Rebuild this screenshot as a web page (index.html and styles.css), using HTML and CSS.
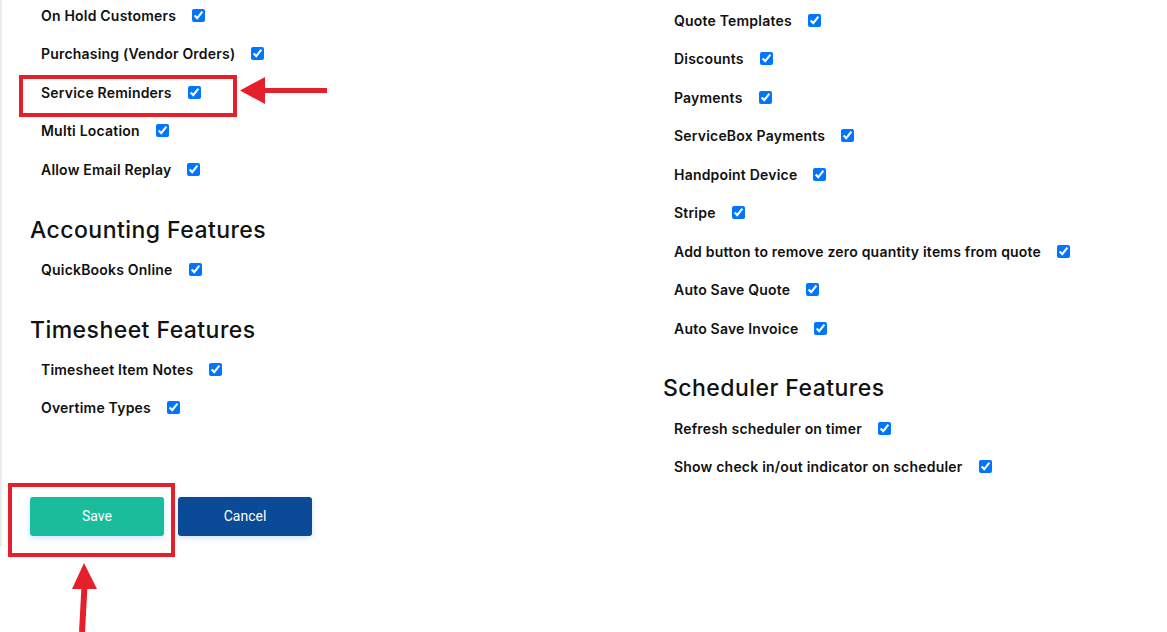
FILE: index.html
```html
<!DOCTYPE html>
<html lang="en">
<head>
    <meta charset="UTF-8">
    <meta name="viewport" content="width=device-width, initial-scale=1.0">
    <title>Feature Settings</title>
    <link rel="stylesheet" href="styles.css">
</head>
<body>

    <div class="panel">
        <div class="columns">
            <!-- left column -->
            <div class="col">
                <div class="group">
                    <label class="row">On Hold Customers <input type="checkbox" checked></label>
                    <label class="row">Purchasing (Vendor Orders) <input type="checkbox" checked></label>
                    <label class="row">Service Reminders <input type="checkbox" checked></label>
                    <label class="row">Multi Location <input type="checkbox" checked></label>
                    <label class="row">Allow Email Replay <input type="checkbox" checked></label>
                </div>

                <h2 class="section-title">Accounting Features</h2>
                <div class="group">
                    <label class="row">QuickBooks Online <input type="checkbox" checked></label>
                </div>

                <h2 class="section-title">Timesheet Features</h2>
                <div class="group">
                    <label class="row">Timesheet Item Notes <input type="checkbox" checked></label>
                    <label class="row">Overtime Types <input type="checkbox" checked></label>
                </div>
            </div>

            <!-- right column -->
            <div class="col col-right">
                <div class="group">
                    <label class="row">Quote Templates <input type="checkbox" checked></label>
                    <label class="row">Discounts <input type="checkbox" checked></label>
                    <label class="row">Payments <input type="checkbox" checked></label>
                    <label class="row">ServiceBox Payments <input type="checkbox" checked></label>
                    <label class="row">Handpoint Device <input type="checkbox" checked></label>
                    <label class="row">Stripe <input type="checkbox" checked></label>
                    <label class="row">Add button to remove zero quantity items from quote <input type="checkbox" checked></label>
                    <label class="row">Auto Save Quote <input type="checkbox" checked></label>
                    <label class="row">Auto Save Invoice <input type="checkbox" checked></label>
                </div>

                <h2 class="section-title">Scheduler Features</h2>
                <div class="group">
                    <label class="row">Refresh scheduler on timer <input type="checkbox" checked></label>
                    <label class="row">Show check in/out indicator on scheduler <input type="checkbox" checked></label>
                </div>
            </div>
        </div>

        <div class="actions">
            <button class="btn btn-save">Save</button>
            <button class="btn btn-cancel">Cancel</button>
        </div>
    </div>

    <!-- red markup drawn on top -->
    <svg class="markup" width="1167" height="632" viewBox="0 0 1167 632">
        <rect x="21" y="77" width="214" height="38" fill="none" stroke="#e4202a" stroke-width="4"/>
        <polygon points="240,90.5 265,77 265,104" fill="#e4202a"/>
        <rect x="262" y="88" width="65" height="5" fill="#e4202a"/>

        <rect x="10" y="485" width="163" height="70" fill="none" stroke="#e4202a" stroke-width="4"/>
        <polygon points="84,563 72,589 97,589" fill="#e4202a"/>
        <line x1="84.5" y1="586" x2="82" y2="632" stroke="#e4202a" stroke-width="6"/>
    </svg>

</body>
</html>
```

FILE: styles.css
```css
body {
    margin: 0;
    background-color: #fff;
    color: #111;
    font-family: 'Inter', 'Noto Sans', sans-serif;
    overflow: hidden;
}
.panel {
    border-left: 2px solid #ececec;
    padding-left: 28px;
    padding-bottom: 11px;
}
.columns {
    display: grid;
    grid-template-columns: 633px 1fr;
}
.col {
    padding-top: 5px;
}
.col-right {
    padding-top: 10px;
}
.group {
    display: flex;
    flex-direction: column;
    gap: 18.5px;
    padding-left: 11px;
}
.row {
    display: flex;
    align-items: center;
    height: 20px;
    font-size: 14px;
    font-weight: 600;
    letter-spacing: 0.2px;
}
.row input {
    margin: 0 0 0 16px;
    width: 13px;
    height: 13px;
}
.section-title {
    margin: 38px 0 16px;
    height: 26px;
    line-height: 26px;
    font-size: 23px;
    font-weight: 500;
    letter-spacing: 0.45px;
}
.col-right .section-title {
    margin: 37px 0 17px;
}
.actions {
    display: flex;
    gap: 14px;
    margin-top: 20px;
}
.btn {
    width: 134px;
    height: 39px;
    border: none;
    border-radius: 3px;
    color: #fff;
    font-family: 'Roboto', sans-serif;
    font-size: 14px;
    box-shadow: 0 2px 6px rgba(60, 150, 255, 0.25);
    cursor: pointer;
}
.btn-save {
    background-color: #1bbc9b;
}
.btn-cancel {
    background-color: #0a4a96;
}
.markup {
    position: absolute;
    top: 0;
    left: 0;
    pointer-events: none;
}
```
